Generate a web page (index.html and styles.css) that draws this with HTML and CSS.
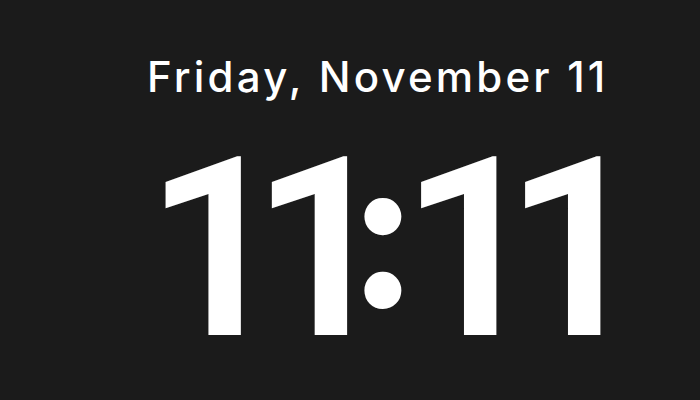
FILE: index.html
```html
<!DOCTYPE html>
<html>
<head>
<meta charset="utf-8">
<link rel="stylesheet" href="styles.css">
</head>
<body>
<main class="lock">
  <div class="date">Friday, November 11</div>
  <div class="time"><span class="digits">1</span><span class="digits tight">1</span><span class="colon">:</span><span class="digits closer">11</span></div>
</main>
</body>
</html>
```
FILE: styles.css
```css
html, body {
  margin: 0;
  padding: 0;
  background: #1b1b1b;
}
.lock {
  width: 700px;
  height: 400px;
  display: flex;
  flex-direction: column;
  align-items: flex-start;
  padding-left: 147px;
  box-sizing: border-box;
  color: #ffffff;
}
.date {
  margin-top: 52px;
  font-family: Inter, "Noto Sans", sans-serif;
  font-size: 42px;
  font-weight: 500;
  line-height: 50px;
  letter-spacing: 3.2px;
}
.time {
  display: flex;
  align-items: flex-start;
  margin-top: 1px;
  margin-left: -2px;
}
.digits {
  font-family: Roboto, sans-serif;
  font-weight: 600;
  font-size: 250px;
  line-height: 293px;
  letter-spacing: -36.5px;
}
.digits.tight {
  letter-spacing: -48.5px;
}
.digits.closer {
  letter-spacing: -39px;
}
.colon {
  font-family: "Liberation Serif", "Times New Roman", serif;
  font-weight: 700;
  font-size: 228px;
  line-height: 253px;
  letter-spacing: -21px;
}
```
